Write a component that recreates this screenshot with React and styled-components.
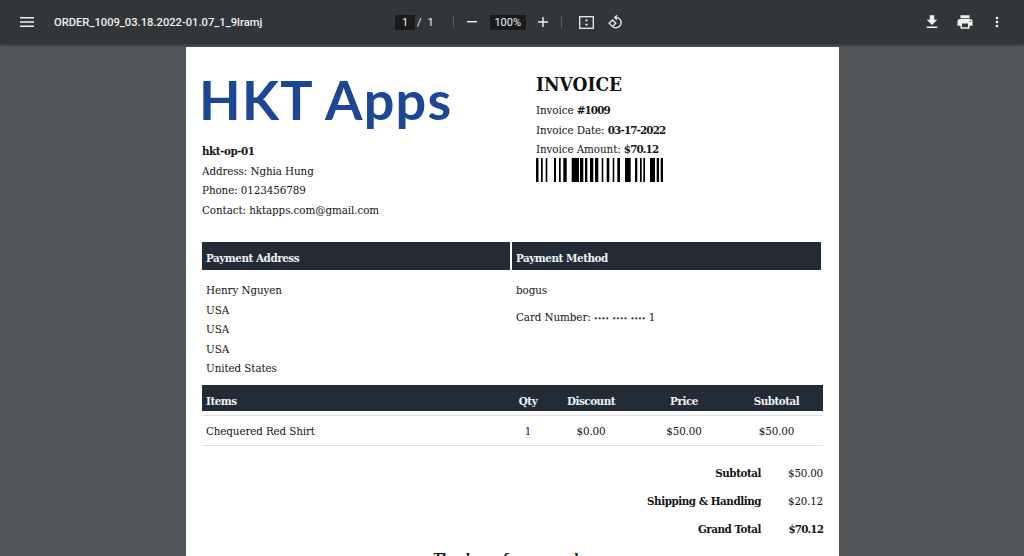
import React from "react";
import styled, { createGlobalStyle } from "styled-components";

const Global = createGlobalStyle`
  html, body { margin: 0; padding: 0; height: 100%; overflow: hidden; background: #525659; }
  * { box-sizing: border-box; }
`;
const Viewer = styled.div`
  width: 1024px; height: 556px; overflow: hidden; display: flex; flex-direction: column; background: #525659;
`;
const Toolbar = styled.header`
  height: 44px; flex: none; background: #323639; color: #f1f1f1; display: flex; align-items: center;
  font-family: Roboto, sans-serif; box-shadow: 0 1px 3px rgba(0,0,0,.4); position: relative; z-index: 1;
`;
const ToolLeft = styled.div`
  width: 395px; flex: none; display: flex; align-items: center; padding-left: 20px; gap: 20px;
`;
const Title = styled.span`font-size: 11.2px; font-weight: 500; white-space: nowrap;`;
const ToolCenter = styled.div`display: flex; align-items: center; flex: 1; font-size: 11px;`;
const NumBox = styled.span`
  display: flex; align-items: center; justify-content: center; width: ${p => p.$w}px; height: 15px;
  background: #191b1c; font-size: 11px; margin-left: ${p => p.$ml || 0}px;
`;
const Txt = styled.span`margin-left: ${p => p.$ml}px;`;
const Sep = styled.span`width: 1px; height: 12px; background: #5a5e61; margin-left: ${p => p.$ml}px;`;
const IconSlot = styled.span`display: flex; margin-left: ${p => p.$ml || 0}px; flex: none;`;
const ToolRight = styled.div`display: flex; align-items: center; gap: 16px; padding-right: 19px;`;

const Scroller = styled.main`flex: 1; min-height: 0; padding-top: 3px; display: flex; justify-content: center;`;
const Sheet = styled.article`
  width: 653px; height: 600px; flex: none; margin-left: 1px; background: #fff; padding: 20px 16px 0;
  font-family: "DejaVu Serif Condensed", "DejaVu Serif", serif; color: #141414; font-size: 11.5px; line-height: 19.5px;
  letter-spacing: -0.08px;
`;
const Head = styled.section`display: grid; grid-template-columns: 334px 1fr;`;
const Logo = styled.div`
  font-family: Lato, sans-serif; font-weight: 700; font-size: 54px; line-height: 66px; color: #1d4695;
  margin: 0 0 0 -3px; letter-spacing: 1.3px; white-space: nowrap;
`;
const Shop = styled.div`margin-top: 9px;`;
const Line = styled.div`white-space: nowrap;`;
const Strong = styled.b`letter-spacing: -0.45px;`;
const Num = styled.b`letter-spacing: -0.85px;`;
const Dots = styled.span`font-size: 7.2px; letter-spacing: -0.05px; word-spacing: 1.2px;`;
const Side = styled.div``;
const InvTitle = styled.h1`margin: 6px 0 6px; font-size: 19px; line-height: 22px; font-weight: 700; color: #111; letter-spacing: 0;`;
const Bars = styled.svg`display: block; width: 127px; height: 24px; margin-top: -2px;`;
const AddrGrid = styled.section`display: grid; grid-template-columns: 308px 309px; gap: 2px; margin-top: 22px; width: 619px;`;
const DarkCell = styled.div`
  background: #212c37; color: #f2f2f2; font-weight: 700; height: 28px; line-height: 33px; padding-left: 4px; letter-spacing: -0.45px;
`;
const AddrCell = styled.div`padding: 9px 4px 6px;`;
const Card = styled.div`margin-top: 7px;`;
const ItemHead = styled.div`
  display: grid; grid-template-columns: 296px 60px 66px 120px 65px 14px; width: 621px; height: 26px; line-height: 33px;
  background: #212c37; color: #f2f2f2; font-weight: 700; letter-spacing: -0.45px;
`;
const ItemRow = styled.div`
  display: grid; grid-template-columns: 296px 60px 66px 120px 65px 14px; width: 621px; height: 31px; line-height: 30px;
  margin-top: 4px; border-top: 1px solid #dfe2e5; border-bottom: 1px solid #dfe2e5; letter-spacing: -0.12px;
`;
const Cell = styled.div`
  text-align: ${p => p.$left ? "left" : "center"}; padding-left: ${p => p.$left ? 4 : 0}px; white-space: nowrap;
`;
const Totals = styled.div`width: 621px; margin-top: 13px;`;
const TotalRow = styled.div`
  display: grid; grid-template-columns: 559px 62px; height: 28px; line-height: 28px; text-align: right;
`;
const TotalLabel = styled.div`font-weight: 700; white-space: nowrap; letter-spacing: -0.45px;`;
const TotalValue = styled.div`font-weight: ${p => p.$bold ? 700 : 400}; letter-spacing: ${p => p.$bold ? "-0.85px" : "-0.2px"};`;
const Thanks = styled.div`text-align: center; font-weight: 700; font-size: 13px; margin-top: 6px; letter-spacing: -0.3px;`;

const Ico = ({ s = 24, children, ...r }) => (
  <svg width={s} height={s} viewBox="0 0 24 24" fill="#f1f1f1" {...r}>{children}</svg>
);

const pattern = [
  [0,2.5],[5,1.7],[9.7,1.6],[18,2],[23,1.7],[27.3,3.4],[35.7,7.3],[44,3.3],[49,2.3],[54,3.3],[59,3.3],
  [65.7,1.6],[70.7,2.6],[76.7,1.6],[81.3,2.7],[89,5.7],[99,2.3],[104,1.7],[107.3,1.7],[114,5],[120.7,2.3],[124.7,2.3]
];

export default function App() {
  return (
    <Viewer>
      <Global />
      <Toolbar>
        <ToolLeft>
          <IconSlot>
            <svg width="14" height="12" viewBox="0 0 14 12" fill="#f1f1f1"><path d="M0 1h14v1.4H0zM0 5.3h14v1.4H0zM0 9.6h14v1.4H0z" /></svg>
          </IconSlot>
          <Title>ORDER_1009_03.18.2022-01.07_1_9lramj</Title>
        </ToolLeft>
        <ToolCenter>
          <NumBox $w={20}>1</NumBox>
          <Txt $ml={2}>/</Txt>
          <Txt $ml={6}>1</Txt>
          <Sep $ml={19} />
          <IconSlot $ml={13}><svg width="10" height="2" viewBox="0 0 10 2" fill="#f1f1f1"><path d="M0 0h10v1.4H0z" /></svg></IconSlot>
          <NumBox $w={36} $ml={13}>100%</NumBox>
          <IconSlot $ml={12}><svg width="10" height="10" viewBox="0 0 10 10" fill="#f1f1f1"><path d="M0 4.3h10v1.4H0zM4.3 0h1.4v10H4.3z" /></svg></IconSlot>
          <Sep $ml={13} />
          <IconSlot $ml={17}>
            <svg width="15" height="13" viewBox="0 0 15 13" fill="none" stroke="#f1f1f1" strokeWidth="1.3"><rect x=".7" y=".7" width="13.6" height="11.6" /><path d="M6.2 4.8 7.5 3.4l1.3 1.4zM6.2 8.2l1.3 1.4 1.3-1.4z" fill="#f1f1f1" strokeWidth=".6" /></svg>
          </IconSlot>
          <IconSlot $ml={14}>
            <svg width="15" height="15" viewBox="0 0 15 15" fill="none" stroke="#f1f1f1" strokeWidth="1.3"><path d="M7 2.4h1.2a5.2 5.2 0 1 1-3 9.6" /><path d="M9 .3 6.8 2.4 9 4.6" /><path d="M4.5 5 1.2 8.3l3.3 3.3 3.3-3.3z" /></svg>
          </IconSlot>
        </ToolCenter>
        <ToolRight>
          <Ico s={18}><path d="M19 9h-4V3H9v6H5l7 7 7-7zM5 18v2h14v-2H5z" /></Ico>
          <Ico s={18} style={{ marginLeft: -1 }}><path d="M19 8H5c-1.66 0-3 1.34-3 3v6h4v4h12v-4h4v-6c0-1.66-1.34-3-3-3zm-3 11H8v-5h8v5zm3-7c-.55 0-1-.45-1-1s.45-1 1-1 1 .45 1 1-.45 1-1 1zm-1-9H6v4h12V3z" /></Ico>
          <Ico s={16} style={{ marginLeft: -1 }}><path d="M12 8c1.1 0 2-.9 2-2s-.9-2-2-2-2 .9-2 2 .9 2 2 2zm0 2c-1.1 0-2 .9-2 2s.9 2 2 2 2-.9 2-2-.9-2-2-2zm0 6c-1.1 0-2 .9-2 2s.9 2 2 2 2-.9 2-2-.9-2-2-2z" /></Ico>
        </ToolRight>
      </Toolbar>
      <Scroller>
        <Sheet>
          <Head>
            <div>
              <Logo>HKT Apps</Logo>
              <Shop>
                <Line><Strong>hkt-op-01</Strong></Line>
                <Line>Address: Nghia Hung</Line>
                <Line>Phone: 0123456789</Line>
                <Line>Contact: hktapps.com@gmail.com</Line>
              </Shop>
            </div>
            <Side>
              <InvTitle>INVOICE</InvTitle>
              <Line>Invoice <Num>#1009</Num></Line>
              <Line>Invoice Date: <Num>03-17-2022</Num></Line>
              <Line>Invoice Amount: <Num>$70.12</Num></Line>
              <Bars viewBox="0 0 127 24">
                {pattern.map(([x, w]) => <rect key={x} x={x} y="0" width={w} height="24" fill="#000" />)}
              </Bars>
            </Side>
          </Head>
          <AddrGrid>
            <DarkCell>Payment Address</DarkCell>
            <DarkCell>Payment Method</DarkCell>
            <AddrCell>
              <Line>Henry Nguyen</Line>
              <Line>USA</Line>
              <Line>USA</Line>
              <Line>USA</Line>
              <Line>United States</Line>
            </AddrCell>
            <AddrCell>
              <Line>bogus</Line>
              <Card>Card Number: <Dots>•••• •••• ••••</Dots> 1</Card>
            </AddrCell>
          </AddrGrid>
          <ItemHead>
            <Cell $left>Items</Cell><Cell>Qty</Cell><Cell>Discount</Cell><Cell>Price</Cell><Cell>Subtotal</Cell><Cell />
          </ItemHead>
          <ItemRow>
            <Cell $left>Chequered Red Shirt</Cell><Cell>1</Cell><Cell>$0.00</Cell><Cell>$50.00</Cell><Cell>$50.00</Cell><Cell />
          </ItemRow>
          <Totals>
            <TotalRow><TotalLabel>Subtotal</TotalLabel><TotalValue>$50.00</TotalValue></TotalRow>
            <TotalRow><TotalLabel>Shipping &amp; Handling</TotalLabel><TotalValue>$20.12</TotalValue></TotalRow>
            <TotalRow><TotalLabel>Grand Total</TotalLabel><TotalValue $bold>$70.12</TotalValue></TotalRow>
          </Totals>
          <Thanks>Thank you for your order</Thanks>
        </Sheet>
      </Scroller>
    </Viewer>
  );
}
